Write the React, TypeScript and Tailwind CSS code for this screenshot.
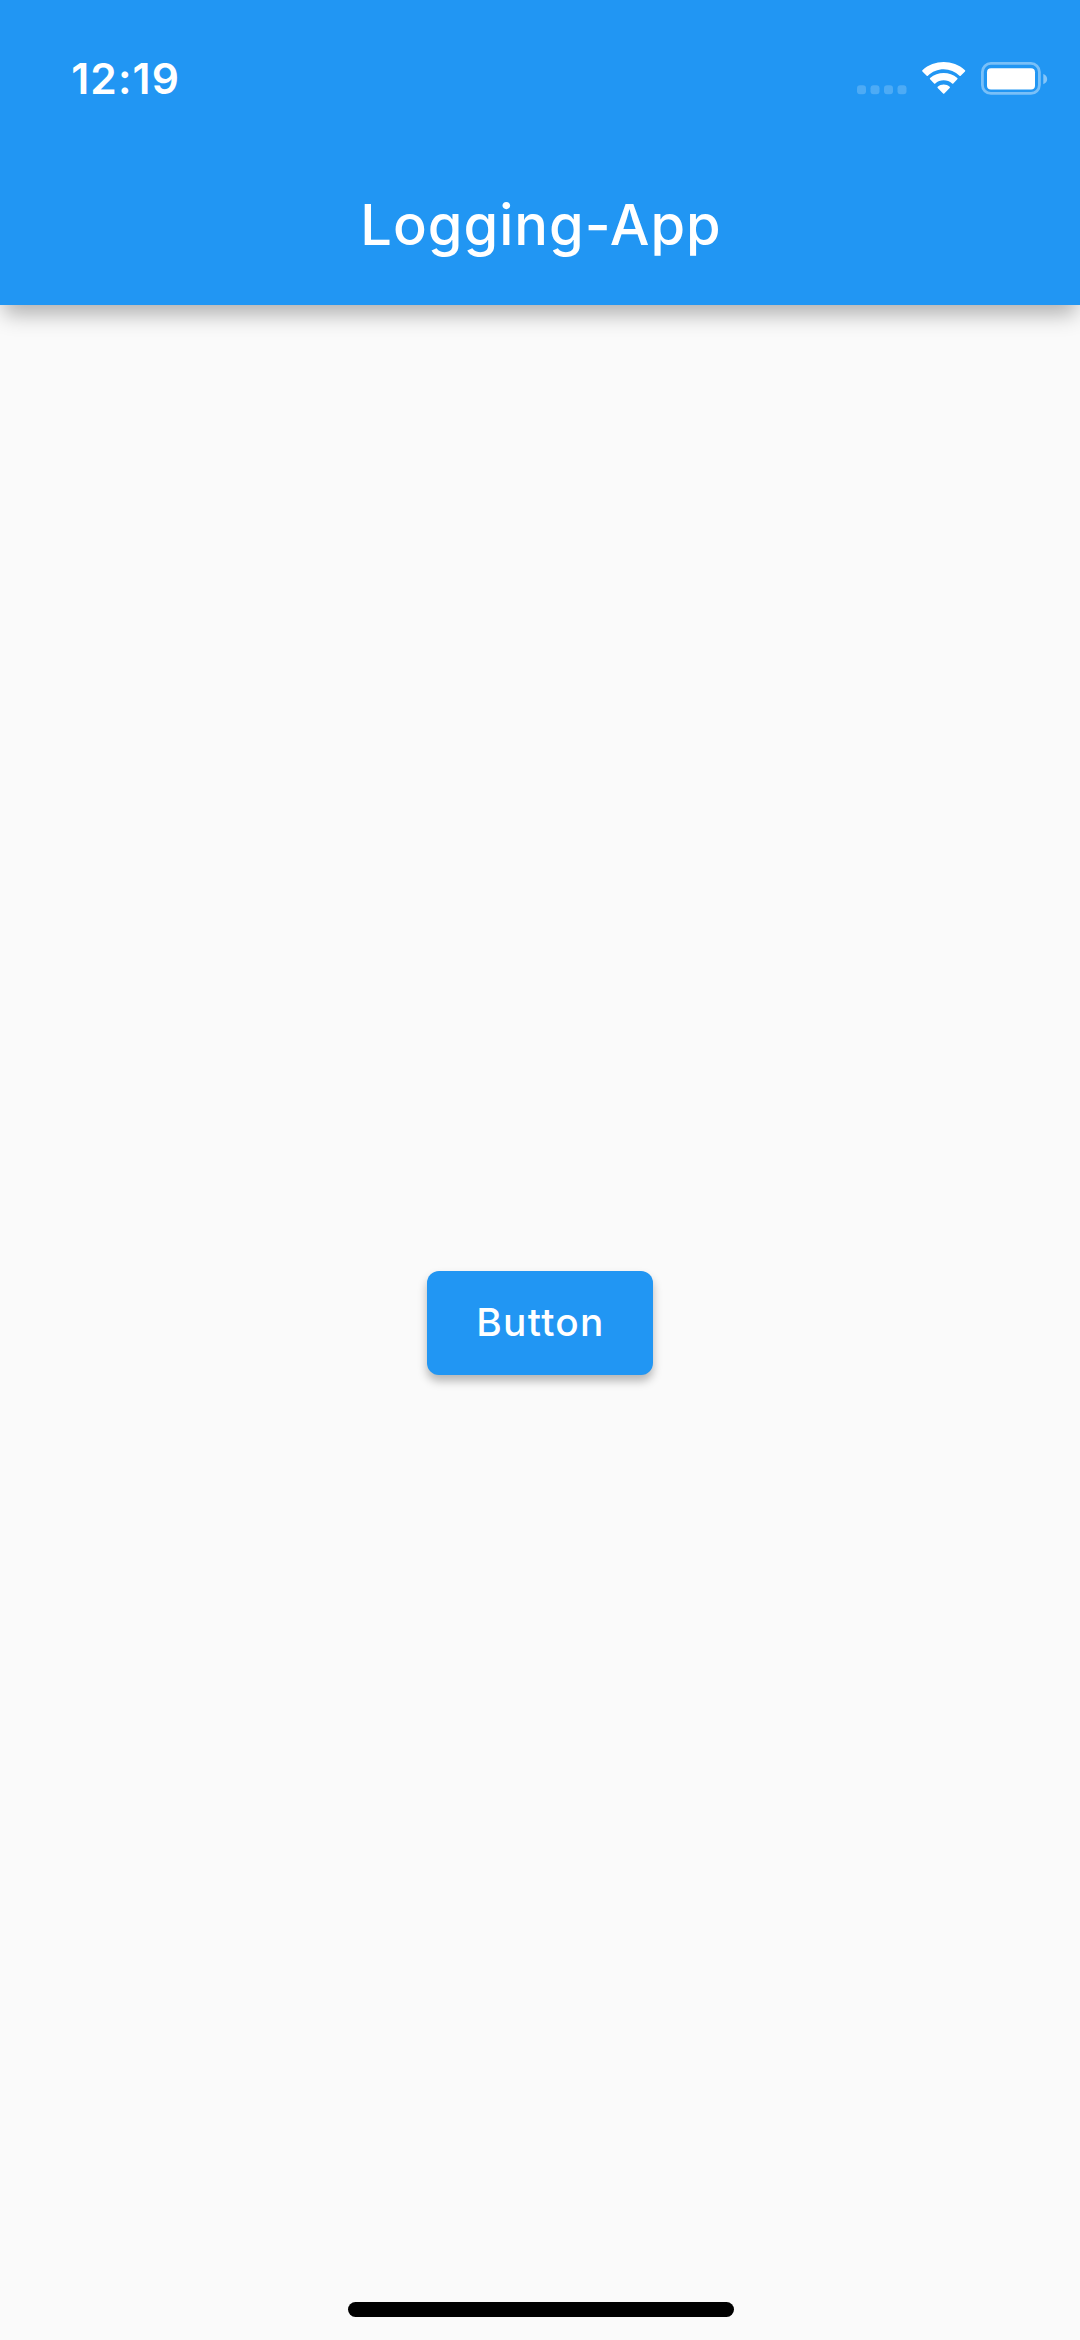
function StatusIcons() {
  return (
    <svg width="200" height="40" viewBox="850 58 200 40" className="block">
      <g fill="#fff" fillOpacity=".2">
        <rect x="857" y="85.3" width="9" height="9" rx="3" />
        <rect x="870.5" y="85.3" width="9" height="9" rx="3" />
        <rect x="884" y="85.3" width="9" height="9" rx="3" />
        <rect x="897.5" y="85.3" width="9" height="9" rx="3" />
      </g>
      <g fill="#fff">
        <path d="M943.7 69.3c6 0 11.500 2.300 15.800 6.400.4.300.9.300 1.200 0l4.300-4.300c.4-.400.4-.900 0-1.200-11.900-10.900-30.700-10.900-42.600 0-.4.300-.4.800 0 1.200l4.300 4.300c.3.300.8.300 1.200 0 4.300-4.100 9.900-6.400 15.800-6.400z" />
        <path d="M943.7 80.200c3.100 0 6.100 1.100 8.400 3.200.4.300.9.300 1.200 0l4-4.200c.4-.4.400-.9 0-1.200-7.700-6.700-19.500-6.700-27.200 0-.4.300-.4.800 0 1.200l4 4.200c.3.300.8.300 1.200 0 2.300-2.100 5.300-3.200 8.400-3.200z" />
        <path d="M949.700 87.900c.4-.4.400-.9 0-1.200-3.400-2.900-8.600-2.900-12 0-.4.300-.4.800 0 1.200l5.400 5.600c.4.400.8.400 1.200 0z" />
      </g>
      <rect x="982.4" y="63.400" width="57" height="30" rx="8.500" fill="none" stroke="#fff" strokeOpacity=".4" strokeWidth="2.800" />
      <rect x="987" y="68.200" width="48" height="21.300" rx="4" fill="#fff" />
      <path d="M1043.300 74v10.300c2.400-.9 3.900-2.900 3.900-5.200s-1.500-4.200-3.900-5.100z" fill="#fff" fillOpacity=".45" />
    </svg>
  );
}

export default function App() {
  return (
    <div className="flex h-[2340px] w-[1080px] flex-col overflow-hidden bg-[#fafafa] font-['Inter',sans-serif] text-white">
      <header className="h-[305.4px] shrink-0 bg-[#2196f3] shadow-[0_13px_20px_-4px_rgba(0,0,0,0.3)]">
        <div className="flex h-[146px] items-start justify-between pt-[58px] pl-[71.3px] pr-[30px]">
          <span className="text-[42.5px] leading-[42px] font-semibold tracking-[1.1px]">12:19</span>
          <StatusIcons />
        </div>
        <h1 className="flex h-[157px] items-center justify-center pl-[2px] text-[56px] leading-none font-medium tracking-[1px]">
          Logging-App
        </h1>
      </header>
      <main className="flex h-[2034.6px] flex-col items-center">
        <button className="mt-[965.3px] flex h-[104px] w-[225.4px] items-center justify-center rounded-[12px] bg-[#2196f3] pb-[1px] pl-px text-[38.8px] leading-none font-medium tracking-[1.3px] shadow-[0_6px_10px_rgba(0,0,0,0.28)]">
          Button
        </button>
        <div className="mt-auto mr-[-1px] mb-[23px] h-[15px] w-[386px] rounded-full bg-black" />
      </main>
    </div>
  );
}
